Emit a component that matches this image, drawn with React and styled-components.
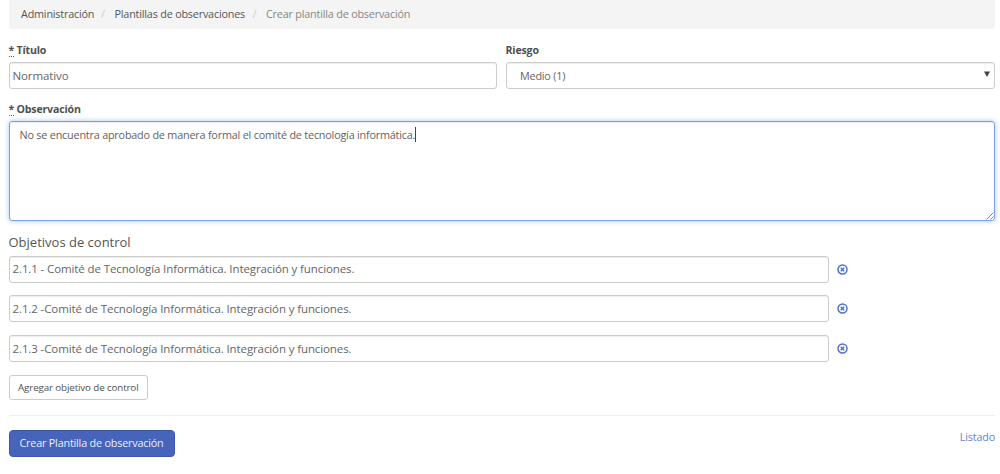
import React from "react";
import styled, { createGlobalStyle } from "styled-components";

const Global = createGlobalStyle`
  * { box-sizing: border-box; }
  body {
    margin: 0;
    background: #fff;
    color: #555;
    font-family: "Open Sans", "Noto Sans", sans-serif;
    font-size: 10.8px;
    letter-spacing: -0.19px;
    line-height: 16px;
  }
`;

const Page = styled.main`
  height: 474px;
  padding: 0 5px 0 8.5px;
  overflow: hidden;
`;

const Breadcrumb = styled.nav`
  display: flex;
  align-items: center;
  height: 28.5px;
  padding: 0 12.5px;
  background: #f4f4f4;
  border-radius: 0 0 4px 4px;
  white-space: nowrap;
`;

const Crumb = styled.span`
  width: ${(p) => p.$width}px;
  color: ${(p) => (p.$current ? "#868686" : "#555")};
`;

const Slash = styled.span`
  width: 20.5px;
  padding-left: 7px;
  color: #ccc;
`;

const FieldGrid = styled.div`
  display: grid;
  grid-template-columns: 488.5px 489px;
  column-gap: 8.5px;
  padding-top: 13.5px;
`;

const Label = styled.div`
  height: 20px;
  font-weight: 700;
  font-size: 10.6px;
  letter-spacing: -0.17px;
  color: #505050;
  white-space: nowrap;
`;

const Required = styled.abbr`
  display: inline-block;
  width: 5.5px;
  height: 15px;
  margin-right: 2.5px;
  border-bottom: 1px dotted #666;
  line-height: 16px;
  vertical-align: top;
`;

const Field = styled.div`
  display: flex;
  align-items: center;
  justify-content: space-between;
  width: ${(p) => p.$width || "100%"};
  height: 27px;
  padding: 0 4px 0 ${(p) => (p.$inset ? 13.5 : 3)}px;
  border: 1px solid #ccc;
  border-radius: 3px;
  box-shadow: inset 0 1px 1px rgba(0, 0, 0, 0.075);
  color: #666;
  font-size: ${(p) => p.$size || 11.5}px;
  letter-spacing: ${(p) => p.$spacing || -0.11}px;
  white-space: nowrap;
`;

const Arrow = styled.svg`
  width: 6px;
  height: 6px;
  margin-top: -3px;
  fill: #444;
`;

const Observation = styled.section`
  padding-top: 12px;
`;

const TextArea = styled.div`
  position: relative;
  display: flex;
  height: 100px;
  padding: 4.5px 10px;
  border: 1px solid #7d9fee;
  border-radius: 3px;
  box-shadow: inset 0 1px 1px rgba(0, 0, 0, 0.075), 0 0 5px rgba(102, 160, 233, 0.6);
  color: #5f5f5f;
  white-space: nowrap;
`;

const Caret = styled.span`
  width: 1px;
  height: 15px;
  background: #444;
`;

const Grip = styled.svg`
  position: absolute;
  right: 0;
  bottom: 0;
  width: 8px;
  height: 8px;
  stroke: #888;
`;

const Heading = styled.h2`
  height: 34.5px;
  margin: 0;
  padding-top: 10.5px;
  font-size: 13px;
  font-weight: 400;
  line-height: 20px;
  letter-spacing: 0;
  color: #555;
`;

const Objective = styled.div`
  display: flex;
  align-items: center;
  gap: 8.5px;
  margin-bottom: 12.9px;
`;

const RemoveIcon = styled.svg`
  width: 11px;
  height: 11px;
  fill: none;
  stroke: #4f71cc;
`;

const AddButton = styled.button`
  display: block;
  width: 139.5px;
  height: 25px;
  padding: 0;
  border: 1px solid #ccc;
  border-radius: 3px;
  background: #fff;
  color: #505050;
  font: 400 9.8px/16px "Open Sans", "Noto Sans", sans-serif;
  letter-spacing: -0.13px;
  white-space: nowrap;
`;

const Footer = styled.footer`
  display: flex;
  justify-content: space-between;
  margin-top: 14.5px;
  padding-top: 14px;
  border-top: 1px solid #eee;
`;

const SubmitButton = styled.button`
  width: 166px;
  height: 27px;
  padding: 0;
  border: 1px solid #3a59ae;
  border-radius: 4px;
  background: #4564ba;
  color: #e9eefb;
  font: 400 10.8px/16px "Open Sans", "Noto Sans", sans-serif;
  letter-spacing: -0.19px;
  white-space: nowrap;
`;

const ListLink = styled.a`
  height: 16px;
  margin-top: -1px;
  color: #6583d4;
`;

const objectives = [
  "2.1.1 - Comité de Tecnología Informática. Integración y funciones.",
  "2.1.2 -Comité de Tecnología Informática. Integración y funciones.",
  "2.1.3 -Comité de Tecnología Informática. Integración y funciones.",
];

export default function App() {
  return (
    <>
      <Global />
      <Page>
        <Breadcrumb>
          <Crumb $width={73}>Administración</Crumb>
          <Slash>/</Slash>
          <Crumb $width={131}>Plantillas de observaciones</Crumb>
          <Slash>/</Slash>
          <Crumb $current>Crear plantilla de observación</Crumb>
        </Breadcrumb>
        <FieldGrid>
          <div>
            <Label><Required>*</Required>Título</Label>
            <Field>Normativo</Field>
          </div>
          <div>
            <Label>Riesgo</Label>
            <Field $inset $size={10.8} $spacing={-0.19}>
              Medio (1)
              <Arrow viewBox="0 0 6 6"><path d="M0 0.5h6L3 6z" /></Arrow>
            </Field>
          </div>
        </FieldGrid>
        <Observation>
          <Label><Required>*</Required>Observación</Label>
          <TextArea>
            <span>No se encuentra aprobado de manera formal el comité de tecnología informática.</span>
            <Caret />
            <Grip viewBox="0 0 8 8"><path d="M0.5 7.5l7-7M4.5 7.5l3-3" /></Grip>
          </TextArea>
        </Observation>
        <Heading>Objetivos de control</Heading>
        {objectives.map((text) => (
          <Objective key={text}>
            <Field $width="820px">{text}</Field>
            <RemoveIcon viewBox="0 0 11 11">
              <circle cx="5.5" cy="5.5" r="4.5" strokeWidth="1.5" />
              <path d="M3.8 3.8l3.4 3.4M7.2 3.8L3.8 7.2" strokeWidth="1.5" />
            </RemoveIcon>
          </Objective>
        ))}
        <AddButton>Agregar objetivo de control</AddButton>
        <Footer>
          <SubmitButton>Crear Plantilla de observación</SubmitButton>
          <ListLink>Listado</ListLink>
        </Footer>
      </Page>
    </>
  );
}
